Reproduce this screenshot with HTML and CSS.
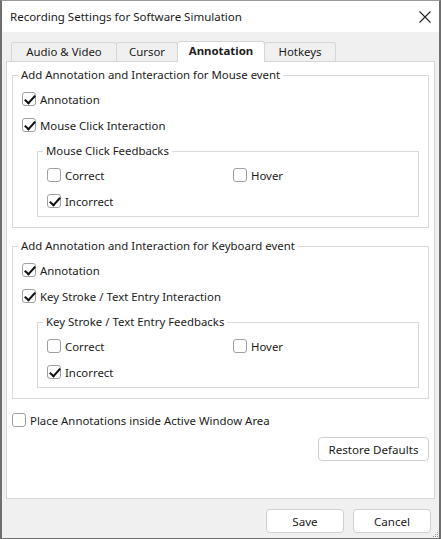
FILE: index.html
```html
<!DOCTYPE html>
<html lang="en">
<head>
    <meta charset="UTF-8">
    <title>Recording Settings for Software Simulation</title>
    <link rel="stylesheet" href="styles.css">
</head>
<body>
    <div class="window">
        <div class="titlebar">
            <span class="title">Recording Settings for Software Simulation</span>
            <svg class="close" width="12" height="12" viewBox="0 0 12 12">
                <path d="M0.5 0.5 L11.5 11.5 M11.5 0.5 L0.5 11.5" stroke="#222" stroke-width="1.1" fill="none"/>
            </svg>
        </div>

        <div class="content">
            <!-- tabs -->
            <div class="tabs">
                <div class="tab tab-av">Audio &amp; Video</div>
                <div class="tab tab-cursor">Cursor</div>
                <div class="tab tab-annotation active">Annotation</div>
                <div class="tab tab-hotkeys">Hotkeys</div>
            </div>

            <div class="panel">
                <fieldset class="group">
                    <legend>Add Annotation and Interaction for Mouse event</legend>
                    <label class="check checked"><span class="box"></span>Annotation</label>
                    <label class="check checked"><span class="box"></span>Mouse Click Interaction</label>
                    <fieldset class="group inner">
                        <legend>Mouse Click Feedbacks</legend>
                        <div class="grid">
                            <label class="check"><span class="box"></span>Correct</label>
                            <label class="check"><span class="box"></span>Hover</label>
                            <label class="check checked"><span class="box"></span>Incorrect</label>
                        </div>
                    </fieldset>
                </fieldset>

                <fieldset class="group">
                    <legend>Add Annotation and Interaction for Keyboard event</legend>
                    <label class="check checked"><span class="box"></span>Annotation</label>
                    <label class="check checked"><span class="box"></span>Key Stroke / Text Entry Interaction</label>
                    <fieldset class="group inner">
                        <legend>Key Stroke / Text Entry Feedbacks</legend>
                        <div class="grid">
                            <label class="check"><span class="box"></span>Correct</label>
                            <label class="check"><span class="box"></span>Hover</label>
                            <label class="check checked"><span class="box"></span>Incorrect</label>
                        </div>
                    </fieldset>
                </fieldset>

                <label class="check place"><span class="box"></span>Place Annotations inside Active Window Area</label>

                <div class="restore-row">
                    <button class="btn restore">Restore Defaults</button>
                </div>
            </div>

            <div class="footer">
                <button class="btn">Save</button>
                <button class="btn">Cancel</button>
            </div>
        </div>

        <svg class="grip" width="7" height="7" viewBox="0 0 7 7">
            <rect x="5" y="1" width="1" height="1" fill="#999"/>
            <rect x="3" y="3" width="1" height="1" fill="#999"/>
            <rect x="5" y="3" width="1" height="1" fill="#999"/>
            <rect x="1" y="5" width="1" height="1" fill="#999"/>
            <rect x="3" y="5" width="1" height="1" fill="#999"/>
            <rect x="5" y="5" width="1" height="1" fill="#999"/>
        </svg>
    </div>
</body>
</html>
```

FILE: styles.css
```css
* {
    box-sizing: border-box;
    margin: 0;
    padding: 0;
}

body {
    font-family: "Noto Sans", "Open Sans", sans-serif;
    font-size: 11.4px;
    color: #1b1b1b;
    background: #f0f0f0;
}

.window {
    position: relative;
    width: 441px;
    height: 539px;
    display: flex;
    flex-direction: column;
    border: 1px solid #6f6f6f;
    border-left-width: 2px;
    border-right-width: 2px;
    border-top-color: #9a9a9a;
    background: #f0f0f0;
}

.titlebar {
    height: 31px;
    flex: none;
    background: white;
    display: flex;
    align-items: center;
    justify-content: space-between;
    padding: 0 8px 0 8px;
}

.title {
    font-size: 11.5px;
}

.content {
    flex: 1;
    display: flex;
    flex-direction: column;
    padding: 9px 4px 0 4px;
}

/* tabs */
.tabs {
    display: flex;
    height: 20px;
    padding-left: 5px;
}

.tab {
    height: 19px;
    margin-top: 1px;
    border: 1px solid #d6d6d6;
    border-bottom: none;
    border-radius: 3px 3px 0 0;
    background: #f0f0f0;
    text-align: center;
    line-height: 18px;
    margin-right: -1px;
}

.tab-av { width: 106px; }
.tab-cursor { width: 62px; }
.tab-annotation { width: 88px; }
.tab-hotkeys { width: 72px; }

.tab.active {
    background: white;
    font-weight: bold;
    height: 21px;
    margin-top: 0;
    position: relative;
    z-index: 1;
}

.panel {
    height: 438px;
    background: white;
    border: 1px solid #d6d6d6;
    padding: 5px 5px 0 5px;
    display: flex;
    flex-direction: column;
}

/* group boxes */
fieldset.group {
    border: 1px solid #d9d9d9;
    padding: 3px 9px 10px 9px;
    margin-top: 0;
}

fieldset.group + fieldset.group {
    margin-top: 10px;
}

fieldset.group legend {
    line-height: 16px;
    padding: 0 3px;
    margin-left: -4px;
}

fieldset.inner {
    margin: 5px 0 0 15px;
    padding: 3px 9px 2px 9px;
}

.grid {
    display: grid;
    grid-template-columns: 186px 1fr;
}

/* checkboxes */
.check {
    display: flex;
    align-items: center;
    height: 26px;
    gap: 4px;
}

.box {
    width: 14px;
    height: 14px;
    border: 1px solid #a0a0a0;
    border-radius: 3px;
    background: white;
    position: relative;
}

.check.checked .box::after {
    content: "";
    position: absolute;
    left: 4px;
    top: 0px;
    width: 4px;
    height: 9px;
    border-right: 2px solid #111;
    border-bottom: 2px solid #111;
    transform: rotate(42deg);
}

.place {
    margin-top: 8px;
}

.restore-row {
    display: flex;
    justify-content: flex-end;
    margin-top: 4px;
}

/* buttons */
.btn {
    font-family: inherit;
    font-size: 11.6px;
    color: #1b1b1b;
    background: white;
    border: 1px solid #cfcfcf;
    border-radius: 4px;
    height: 24px;
}

.restore {
    width: 111px;
}

.footer {
    display: flex;
    justify-content: flex-end;
    gap: 9px;
    padding: 10px 4px 0 0;
}

.footer .btn {
    width: 78px;
}

.grip {
    position: absolute;
    right: 0;
    bottom: 0;
}
```
